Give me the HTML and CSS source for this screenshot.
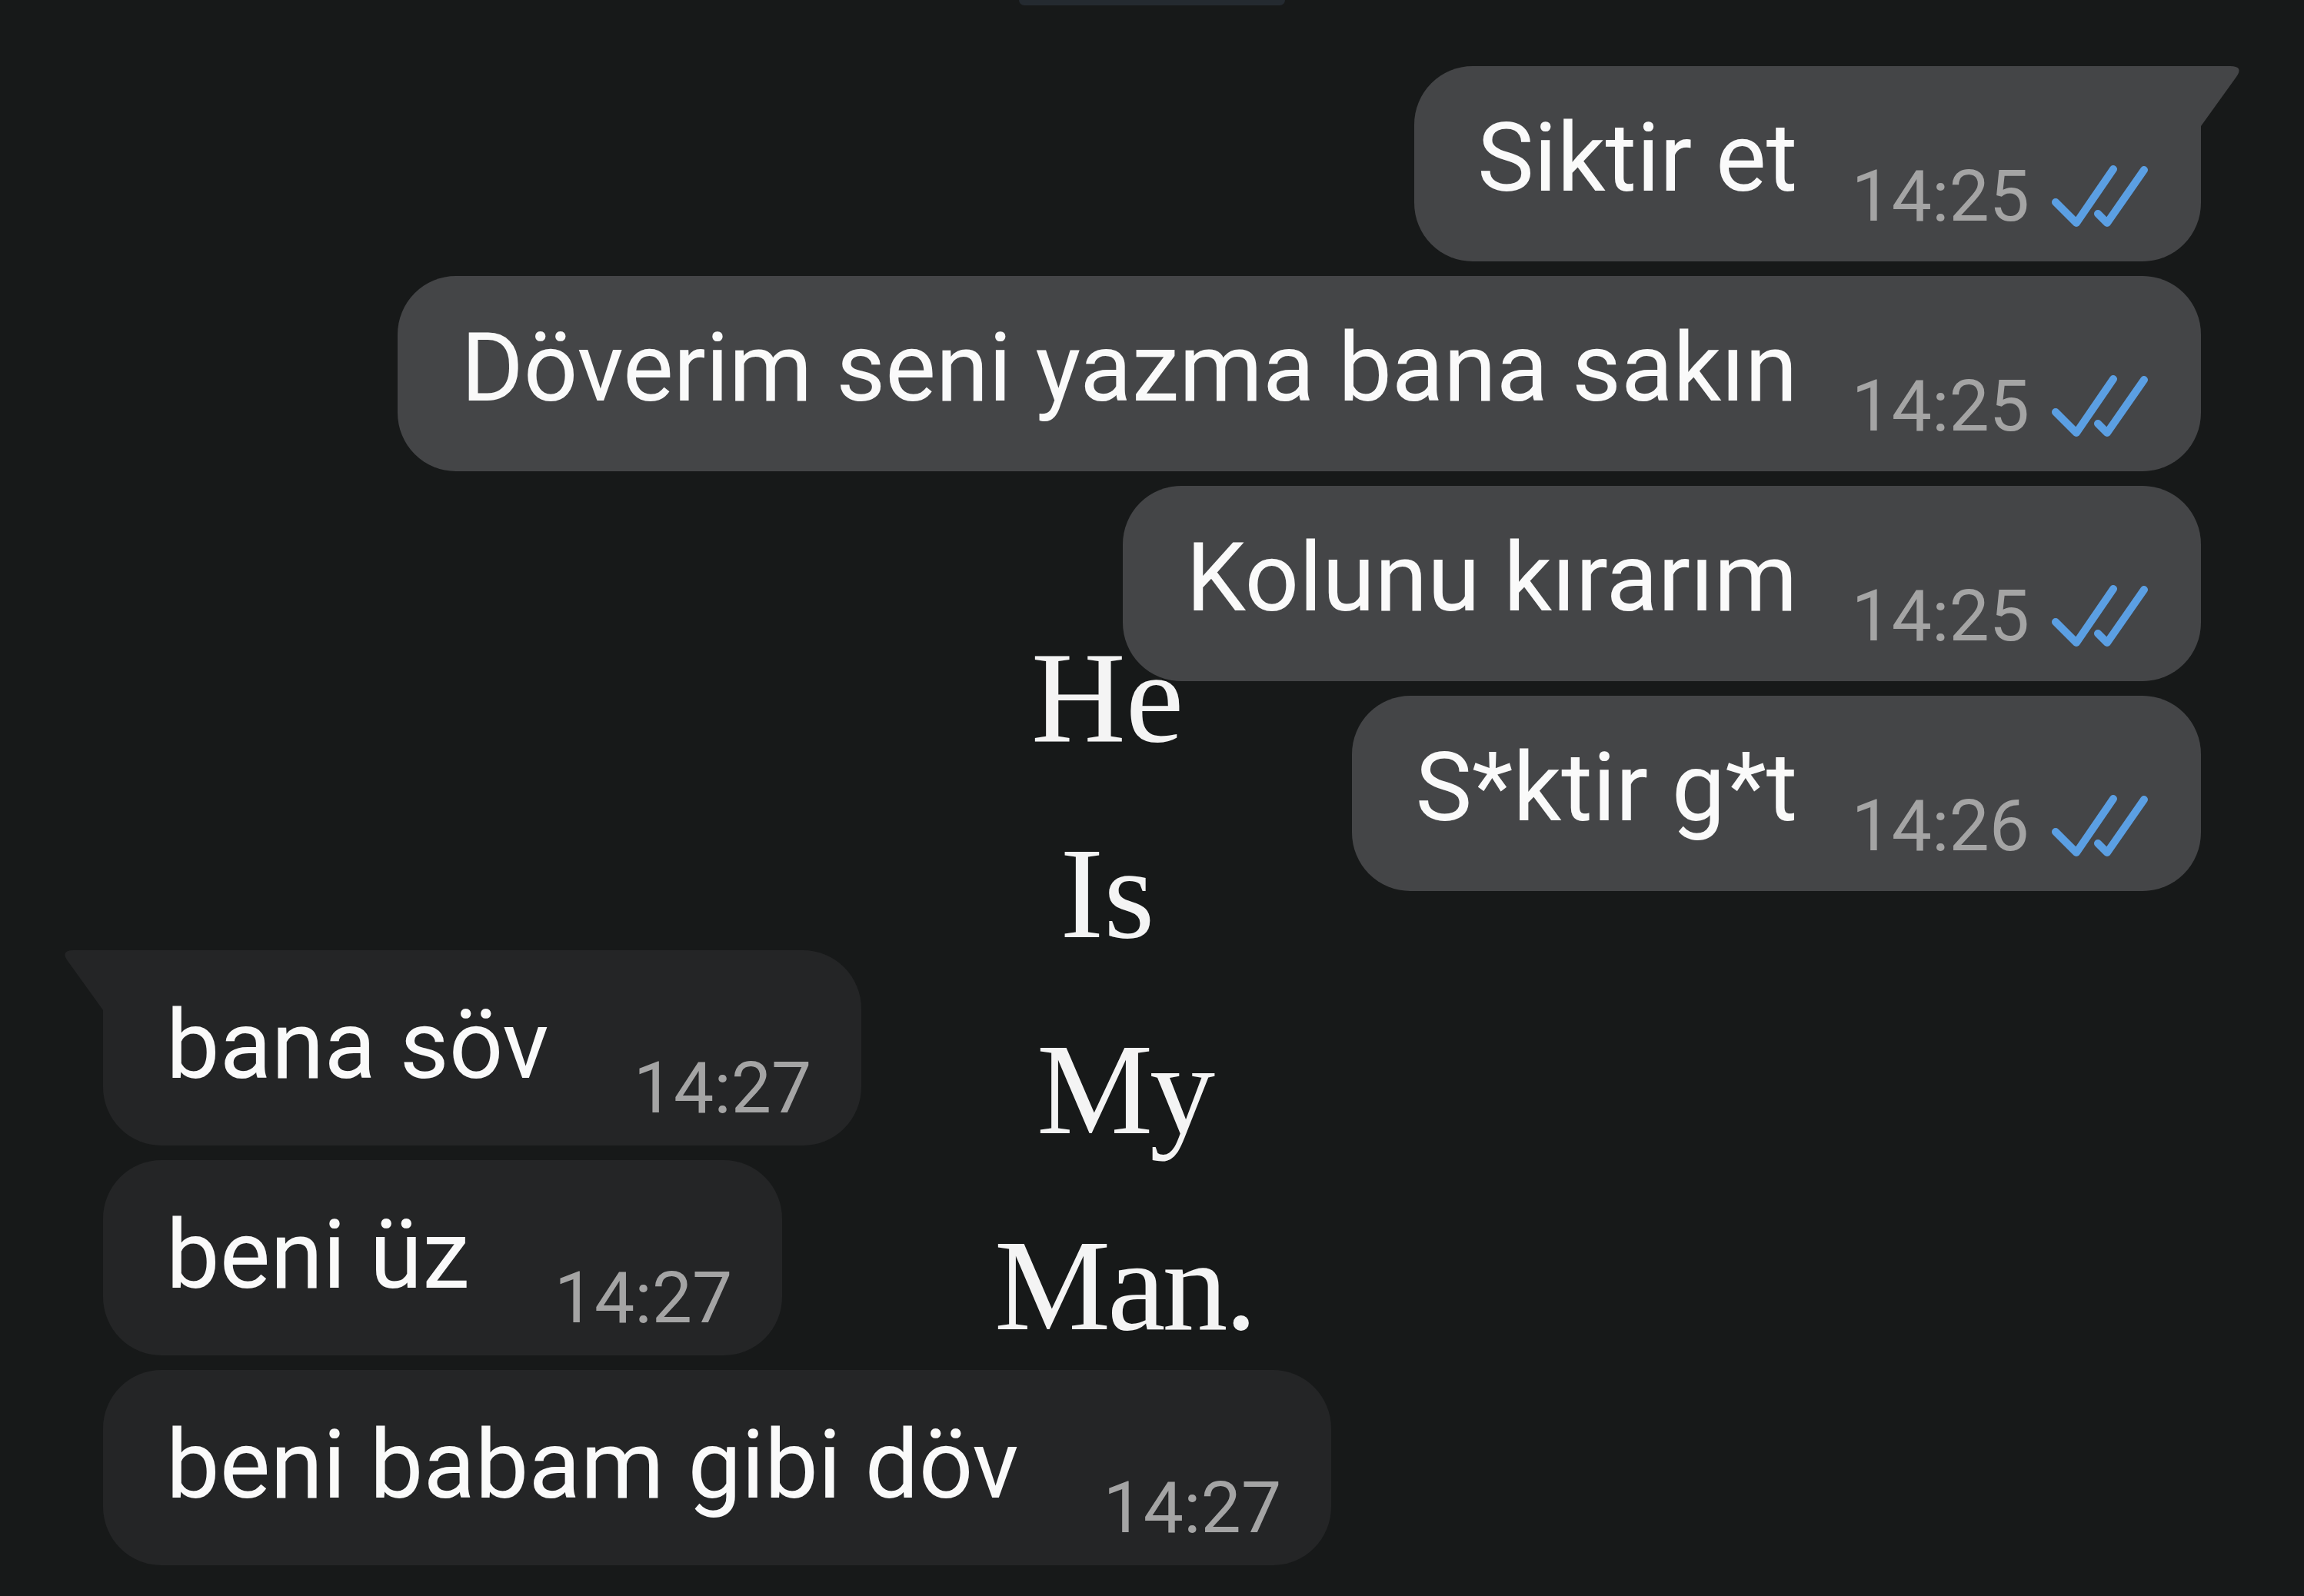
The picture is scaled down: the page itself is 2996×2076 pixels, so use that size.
FILE: index.html
```html
<!DOCTYPE html>
<html>
<head>
    <title>Sohbet</title>
    <link rel="stylesheet" href="styles.css">
</head>
<body>
    <div class="chat">
        <!-- date pill, scrolled mostly off the top -->
        <div class="date-chip"></div>

        <!-- Outgoing -->
        <div class="msg out tail">
            <span class="text">Siktir et</span>
            <span class="time">14:25</span>
            <svg class="ticks" viewBox="0 0 130 85"><path d="M8 50 L35 77 L83 7 M63 65 L75 77 L123 8"/></svg>
        </div>
        <div class="msg out">
            <span class="text">Döverim seni yazma bana sakın</span>
            <span class="time">14:25</span>
            <svg class="ticks" viewBox="0 0 130 85"><path d="M8 50 L35 77 L83 7 M63 65 L75 77 L123 8"/></svg>
        </div>
        <div class="msg out">
            <span class="text">Kolunu kırarım</span>
            <span class="time">14:25</span>
            <svg class="ticks" viewBox="0 0 130 85"><path d="M8 50 L35 77 L83 7 M63 65 L75 77 L123 8"/></svg>
        </div>
        <div class="msg out">
            <span class="text">S*ktir g*t</span>
            <span class="time">14:26</span>
            <svg class="ticks" viewBox="0 0 130 85"><path d="M8 50 L35 77 L83 7 M63 65 L75 77 L123 8"/></svg>
        </div>

        <!-- Incoming -->
        <div class="msg in tail first-in">
            <span class="text">bana söv</span>
            <span class="time">14:27</span>
        </div>
        <div class="msg in">
            <span class="text">beni üz</span>
            <span class="time">14:27</span>
        </div>
        <div class="msg in">
            <span class="text">beni babam gibi döv</span>
            <span class="time">14:27</span>
        </div>
    </div>

    <div class="caption">
        <div>He</div>
        <div>Is</div>
        <div class="shift">My</div>
        <div class="shift">Man.</div>
    </div>
</body>
</html>
```

FILE: styles.css
```css
html, body { margin: 0; background: #171919; }
body { font-family: Roboto, "Noto Sans", sans-serif; color: #fafafa; position: relative; min-height: 2076px; overflow: hidden; }

.chat { display: flex; flex-direction: column; gap: 19px; padding: 0 134px; }
.date-chip { align-self: center; width: 346px; height: 7px; margin-bottom: 60px; background: #242a30; border-radius: 0 0 18px 18px; }

.msg { position: relative; display: flex; align-items: flex-end; height: 254px; box-sizing: border-box; border-radius: 76px; white-space: nowrap; }
.msg .text { font-size: 124px; line-height: 124px; margin-bottom: 72px; }
.msg .time { font-size: 93px; line-height: 93px; color: #a4a4a4; margin-bottom: 38px; }

.msg.out { align-self: flex-end; background: #444547; padding: 0 67px 0 82px; }
.msg.out .time { margin-left: 70px; }
.msg.out .ticks { width: 130px; height: 85px; margin: 0 0 42px 26px; fill: none; stroke: #5b9fe3; stroke-width: 10; stroke-linecap: round; stroke-linejoin: round; }

.msg.in { align-self: flex-start; background: #242526; padding: 0 65px 0 82px; }
.msg.in .text { margin-bottom: 68px; }
.msg.in .time { margin-left: 110px; margin-bottom: 28px; }
.msg.first-in { margin-top: 58px; }

/* little tails on the first bubble of each group */
.msg.tail::after { content: ""; position: absolute; top: 0; width: 53px; height: 78px; background: inherit; }
.msg.out.tail { border-top-right-radius: 0; }
.msg.out.tail::after { left: 100%; clip-path: path('M0 0 H38 Q56 0 46 14 L0 78 Z'); }
.msg.in.tail { border-top-left-radius: 0; }
.msg.in.tail::after { right: 100%; clip-path: path('M53 0 H15 Q-3 0 7 14 L53 78 Z'); }

.caption { position: absolute; left: 1240px; top: 780px; width: 400px; text-align: center; font-family: "Liberation Serif", "DejaVu Serif", serif; font-size: 170px; line-height: 255px; color: #f4f4f4; }
.caption .shift { padding-left: 44px; letter-spacing: -4px; }
```
